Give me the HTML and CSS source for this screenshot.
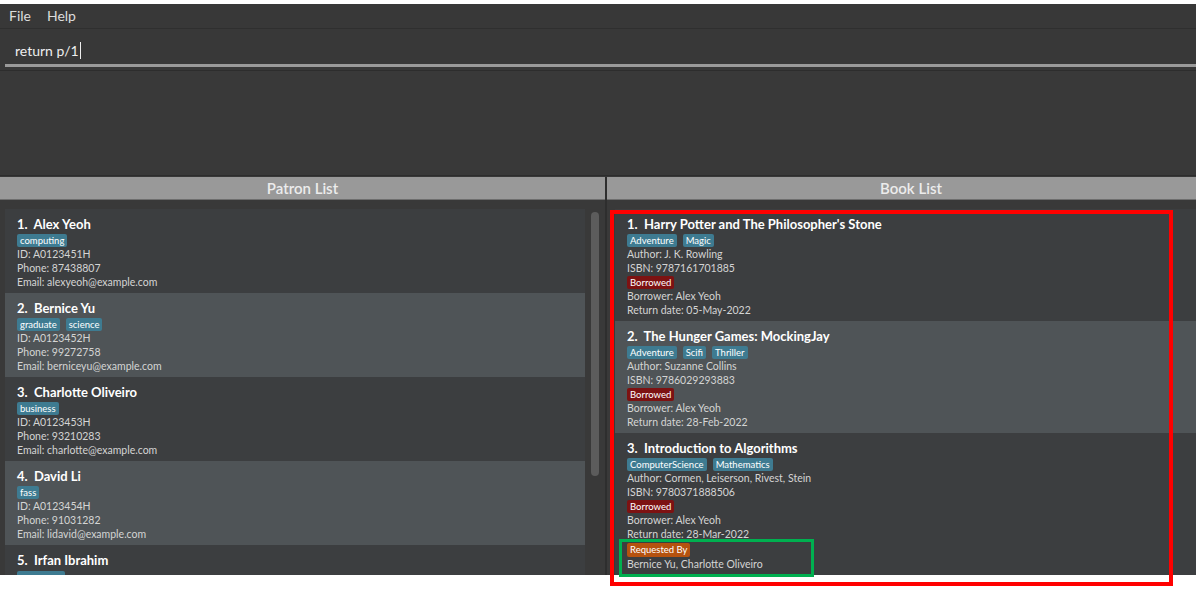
FILE: index.html
```html
<!DOCTYPE html>
<html lang="en">

<head>
    <meta charset="UTF-8">
    <meta name="viewport" content="width=device-width, initial-scale=1.0">
    <title>LibTask</title>
    <link rel="stylesheet" href="styles.css">
</head>

<body>
    <div class="app">
        <div class="menu-bar">
            <span class="menu-item">File</span>
            <span class="menu-item">Help</span>
        </div>

        <div class="command-box">
            <span class="command-text">return p/1</span><span class="caret"></span>
        </div>

        <div class="result-display"></div>

        <div class="panels">
            <div class="panel patron-panel">
                <div class="panel-header">Patron List</div>
                <div class="list-view">
                    <div class="cells">
                        <div class="cell">
                            <div class="cell-title">1.&nbsp; Alex Yeoh</div>
                            <div class="tags"><span class="tag">computing</span></div>
                            <div class="line">ID: A0123451H</div>
                            <div class="line">Phone: 87438807</div>
                            <div class="line">Email: alexyeoh@example.com</div>
                        </div>
                        <div class="cell">
                            <div class="cell-title">2.&nbsp; Bernice Yu</div>
                            <div class="tags"><span class="tag">graduate</span><span class="tag">science</span></div>
                            <div class="line">ID: A0123452H</div>
                            <div class="line">Phone: 99272758</div>
                            <div class="line">Email: berniceyu@example.com</div>
                        </div>
                        <div class="cell">
                            <div class="cell-title">3.&nbsp; Charlotte Oliveiro</div>
                            <div class="tags"><span class="tag">business</span></div>
                            <div class="line">ID: A0123453H</div>
                            <div class="line">Phone: 93210283</div>
                            <div class="line">Email: charlotte@example.com</div>
                        </div>
                        <div class="cell">
                            <div class="cell-title">4.&nbsp; David Li</div>
                            <div class="tags"><span class="tag">fass</span></div>
                            <div class="line">ID: A0123454H</div>
                            <div class="line">Phone: 91031282</div>
                            <div class="line">Email: lidavid@example.com</div>
                        </div>
                        <div class="cell">
                            <div class="cell-title">5.&nbsp; Irfan Ibrahim</div>
                            <div class="tags"><span class="tag tag-cut"></span></div>
                        </div>
                    </div>
                    <div class="scrollbar">
                        <div class="thumb"></div>
                    </div>
                </div>
            </div>

            <div class="panel book-panel">
                <div class="panel-header book-header">Book List</div>
                <div class="list-view">
                    <div class="cells">
                        <div class="cell">
                            <div class="cell-title">1.&nbsp; Harry Potter and The Philosopher's Stone</div>
                            <div class="tags"><span class="tag">Adventure</span><span class="tag">Magic</span></div>
                            <div class="line">Author: J. K. Rowling</div>
                            <div class="line">ISBN: 9787161701885</div>
                            <div class="tags status"><span class="tag borrowed">Borrowed</span></div>
                            <div class="line">Borrower: Alex Yeoh</div>
                            <div class="line">Return date: 05-May-2022</div>
                        </div>
                        <div class="cell">
                            <div class="cell-title">2.&nbsp; The Hunger Games: MockingJay</div>
                            <div class="tags"><span class="tag">Adventure</span><span class="tag">Scifi</span><span class="tag">Thriller</span></div>
                            <div class="line">Author: Suzanne Collins</div>
                            <div class="line">ISBN: 9786029293883</div>
                            <div class="tags status"><span class="tag borrowed">Borrowed</span></div>
                            <div class="line">Borrower: Alex Yeoh</div>
                            <div class="line">Return date: 28-Feb-2022</div>
                        </div>
                        <div class="cell last">
                            <div class="cell-title">3.&nbsp; Introduction to Algorithms</div>
                            <div class="tags"><span class="tag">ComputerScience</span><span class="tag">Mathematics</span></div>
                            <div class="line">Author: Cormen, Leiserson, Rivest, Stein</div>
                            <div class="line">ISBN: 9780371888506</div>
                            <div class="tags status"><span class="tag borrowed">Borrowed</span></div>
                            <div class="line">Borrower: Alex Yeoh</div>
                            <div class="line">Return date: 28-Mar-2022</div>
                            <div class="tags status request"><span class="tag requested">Requested By</span></div>
                            <div class="line">Bernice Yu, Charlotte Oliveiro</div>
                        </div>
                    </div>
                </div>
            </div>
        </div>
    </div>

    <div class="mark mark-red"></div>
    <div class="mark mark-green"></div>
</body>

</html>
```

FILE: styles.css
```css
body {
    margin: 0;
    padding: 4px 5px 0 0;
    background-color: #fff;
    font-family: Lato, "Open Sans", sans-serif;
}

.app {
    width: 1196px;
    height: 571px;
    background-color: #383838;
    display: flex;
    flex-direction: column;
    overflow: hidden;
}

.menu-bar {
    height: 25px;
    flex-shrink: 0;
    display: flex;
    align-items: center;
    gap: 16px;
    padding: 0 0 2px 9px;
    border-bottom: 1px solid #2f2f2f;
    box-sizing: border-box;
}

.menu-item {
    color: #dcdcdc;
    font-size: 14px;
}

.command-box {
    height: 38px;
    flex-shrink: 0;
    margin-left: 5px;
    padding: 7px 0 0 10px;
    display: flex;
    align-items: center;
    border-bottom: 3px solid #9a9a9a;
    box-sizing: border-box;
}

.command-text {
    color: #eeeeee;
    font-size: 14px;
}

.caret {
    width: 1px;
    height: 17px;
    background-color: #eee;
    margin-left: 1px;
}

.result-display {
    height: 106px;
    flex-shrink: 0;
    margin-top: 3px;
    border-top: 1px solid #2d2d2d;
    border-bottom: 1px solid #2d2d2d;
    box-sizing: border-box;
    background-color: #393939;
}

.panels {
    flex: 1;
    min-height: 0;
    display: flex;
    margin-top: 1px;
    gap: 2px;
    background-color: #2e2e2e;
}

.panel {
    display: flex;
    flex-direction: column;
    min-height: 0;
    background-color: #393939;
}

.patron-panel {
    width: 605px;
}

.book-panel {
    flex: 1;
}

.panel-header {
    height: 23px;
    flex-shrink: 0;
    line-height: 23px;
    background-color: #999;
    color: #ececec;
    text-align: center;
    font-size: 15px;
    font-weight: 600;
    border-bottom: 1px solid #6e6e6e;
    box-sizing: border-box;
}

.book-header {
    padding-left: 19px;
}

.list-view {
    flex: 1;
    min-height: 0;
    display: flex;
    padding-top: 9px;
    overflow: hidden;
}

.patron-panel .list-view {
    padding-left: 5px;
}

.book-panel .list-view {
    padding-left: 8px;
}

.cells {
    flex: 1;
    display: flex;
    flex-direction: column;
}

.cell {
    padding: 5px 12px 4px;
    background-color: #3c3e40;
    flex-shrink: 0;
}

.cell:nth-child(even) {
    background-color: #4f5457;
}

.cell.last {
    flex: 1;
}

.cell-title {
    color: #ffffff;
    font-size: 13px;
    font-weight: 700;
    line-height: 20px;
}

.tags {
    display: flex;
    gap: 6px;
    height: 13px;
}

.tags.status {
    margin-top: 1px;
}

.tags.request {
    margin-top: 2px;
    height: 14px;
}

.tag {
    background-color: #3e7b91;
    color: #fff;
    font-size: 9.5px;
    line-height: 13px;
    padding: 0 3px;
    border-radius: 2px;
}

.tag-cut {
    width: 42px;
    margin-top: 1px;
}

.tag.borrowed {
    background-color: #7d1212;
}

.tag.requested {
    background-color: #b5520f;
    line-height: 14px;
}

.line {
    color: #d4d4d4;
    font-size: 10.5px;
    line-height: 14px;
}

.scrollbar {
    width: 20px;
    display: flex;
    justify-content: center;
    padding-top: 3px;
}

.thumb {
    width: 8px;
    height: 264px;
    background-color: #5c5c5c;
    border-radius: 4px;
}

.mark {
    position: absolute;
    box-sizing: border-box;
}

.mark-red {
    left: 610px;
    top: 210px;
    width: 563px;
    height: 376px;
    border: 4px solid #ff0000;
}

.mark-green {
    left: 619px;
    top: 539px;
    width: 195px;
    height: 38px;
    border: 3px solid #00b050;
}
```
